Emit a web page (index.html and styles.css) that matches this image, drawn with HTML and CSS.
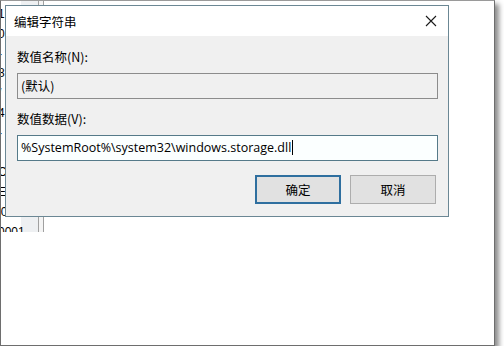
FILE: index.html
```html
<!DOCTYPE html>
<html lang="zh-CN">
<head>
    <meta charset="UTF-8">
    <title>编辑字符串</title>
    <link rel="stylesheet" href="styles.css">
</head>
<body>
    <div class="screen">
        <!-- registry editor behind the dialog -->
        <div class="regedit">
            <div class="col-names">
                <div class="row">1</div>
                <div class="row">0</div>
                <div class="row">-</div>
                <div class="row">8</div>
                <div class="row">/</div>
                <div class="row">4</div>
                <div class="row">-</div>
                <div class="row">|</div>
                <div class="row">C</div>
                <div class="row">E</div>
                <div class="row">i00.</div>
                <div class="row">0001</div>
            </div>
            <div class="col-split"></div>
            <div class="col-data"></div>
        </div>

        <div class="dialog">
            <div class="titlebar">
                <span class="title">编辑字符串</span>
                <svg class="close" width="12" height="12" viewBox="0 0 12 12">
                    <path d="M1 1 L11 11 M11 1 L1 11" stroke="#1a1a1a" stroke-width="1.1" fill="none"/>
                </svg>
            </div>
            <div class="content">
                <label class="lbl lbl-name">数值名称(N):</label>
                <div class="field readonly">(默认)</div>
                <label class="lbl lbl-data">数值数据(V):</label>
                <div class="field active">%SystemRoot%\system32\windows.storage.dll<span class="caret"></span></div>
                <div class="buttons">
                    <button class="btn primary">确定</button>
                    <button class="btn">取消</button>
                </div>
            </div>
        </div>
    </div>
</body>
</html>
```

FILE: styles.css
```css
body {
    margin: 0;
    background: #fff;
    font-family: "Noto Sans", "Noto Sans CJK SC", sans-serif;
    font-size: 12px;
    color: #000;
}
.screen {
    position: relative;
    width: 493px;
    height: 344px;
    border: 1px solid #6e6e6e;
    border-top-color: #9a9a9a;
    background: #fff;
    box-shadow: 4px 4px 5px rgba(0, 0, 0, 0.45);
    overflow: hidden;
}
.regedit {
    display: flex;
    height: 231px;
}
.col-names {
    width: 37px;
    overflow: hidden;
    padding-top: 4px;
    box-sizing: border-box;
    background: linear-gradient(90deg, #fff 0, #fff 20px, #eef0f2 20px);
    font-family: "Liberation Sans", "Noto Sans CJK SC", sans-serif;
}
.row {
    height: 19.8px;
    line-height: 19px;
    margin-left: -3px;
    white-space: nowrap;
}
.col-split {
    width: 4px;
    border-left: 1px solid #a0a0a0;
    border-right: 1px solid #a0a0a0;
    background: #f4f4f4;
}
.col-data {
    flex: 1;
    background: #fff;
}
.dialog {
    position: absolute;
    left: 4px;
    top: 4px;
    width: 442px;
    height: 210px;
    border: 1px solid #6b8794;
    background: #f0f0f0;
    display: flex;
    flex-direction: column;
}
.titlebar {
    height: 30px;
    background: #fff;
    display: flex;
    align-items: center;
    justify-content: space-between;
    padding: 0 11px 0 8px;
}
.title {
    font-family: "Noto Sans CJK SC", sans-serif;
    font-size: 12.5px;
}
.close {
    display: block;
}
.content {
    display: flex;
    flex-direction: column;
    padding: 13px 11px 0 11px;
}
.lbl {
    height: 16px;
    line-height: 16px;
    font-family: "Noto Sans CJK SC", sans-serif;
    font-size: 12.5px;
}
.lbl-data {
    margin-top: 12px;
}
.field {
    box-sizing: border-box;
    height: 26px;
    width: 421px;
    line-height: 24px;
    padding-left: 3px;
    margin-top: 8px;
    white-space: nowrap;
    font-family: "Noto Sans CJK SC", sans-serif;
    font-size: 12.5px;
}
.readonly {
    border: 1px solid #8c8c8c;
    background: #f0f0f0;
}
.active {
    border: 1px solid #557a89;
    background: #fbffff;
    font-family: "Open Sans", "Noto Sans CJK SC", sans-serif;
    font-size: 12.5px;
}
.caret {
    display: inline-block;
    width: 1px;
    height: 15px;
    background: #000;
    vertical-align: -3px;
    margin-left: 1px;
}
.buttons {
    display: flex;
    justify-content: flex-end;
    gap: 9px;
    margin-top: 14px;
    padding-right: 1px;
}
.btn {
    box-sizing: border-box;
    width: 86px;
    height: 29px;
    border: 1px solid #adadad;
    background: #e1e1e1;
    font-family: "Noto Sans CJK SC", sans-serif;
    font-size: 12.5px;
    color: #000;
    padding: 0;
}
.primary {
    border: 2px solid #2f6f9f;
}
```
